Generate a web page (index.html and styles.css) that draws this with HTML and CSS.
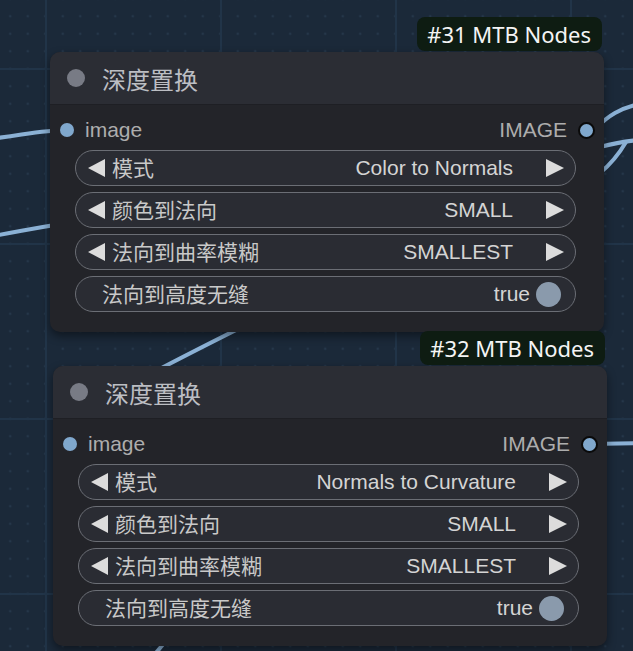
FILE: index.html
```html
<!DOCTYPE html>
<html lang="zh">
<head>
    <meta charset="UTF-8">
    <meta name="viewport" content="width=device-width, initial-scale=1.0">
    <title>深度置换</title>
    <link rel="stylesheet" href="styles.css">
</head>
<body>
    <div class="canvas">
        <svg class="links" width="633" height="651" viewBox="0 0 633 651">
            <path d="M -20 140 C 20 136, 40 130, 67 130" />
            <path d="M -20 238 C 20 232, 40 226, 90 220" />
            <path d="M 590 130 C 700 130, -60 444, 70 444" />
            <path d="M 596 128 C 608 116, 620 108, 640 104" />
            <path d="M 600 147 C 615 143, 625 141, 640 140" />
            <path d="M 626 142 C 619 154, 612 163, 600 173" />
            <path d="M 590 444 L 640 443" />
            <path d="M 150 660 L 170 636" />
        </svg>

        <div class="node node-31">
            <div class="badge">#31 MTB Nodes</div>
            <div class="node-title">
                <span class="title-dot"></span>
                <span>深度置换</span>
            </div>
            <div class="node-body">
                <div class="slots">
                    <div class="slot-in"><span class="dot"></span>image</div>
                    <div class="slot-out">IMAGE<span class="dot dot-out"></span></div>
                </div>
                <div class="widgets">
                    <div class="widget combo">
                        <span class="arrow left"></span>
                        <span class="label">模式</span>
                        <span class="value">Color to Normals</span>
                        <span class="arrow right"></span>
                    </div>
                    <div class="widget combo">
                        <span class="arrow left"></span>
                        <span class="label">颜色到法向</span>
                        <span class="value">SMALL</span>
                        <span class="arrow right"></span>
                    </div>
                    <div class="widget combo">
                        <span class="arrow left"></span>
                        <span class="label">法向到曲率模糊</span>
                        <span class="value">SMALLEST</span>
                        <span class="arrow right"></span>
                    </div>
                    <div class="widget toggle">
                        <span class="label">法向到高度无缝</span>
                        <span class="value">true</span>
                        <span class="knob"></span>
                    </div>
                </div>
            </div>
        </div>

        <div class="node node-32">
            <div class="badge">#32 MTB Nodes</div>
            <div class="node-title">
                <span class="title-dot"></span>
                <span>深度置换</span>
            </div>
            <div class="node-body">
                <div class="slots">
                    <div class="slot-in"><span class="dot"></span>image</div>
                    <div class="slot-out">IMAGE<span class="dot dot-out"></span></div>
                </div>
                <div class="widgets">
                    <div class="widget combo">
                        <span class="arrow left"></span>
                        <span class="label">模式</span>
                        <span class="value">Normals to Curvature</span>
                        <span class="arrow right"></span>
                    </div>
                    <div class="widget combo">
                        <span class="arrow left"></span>
                        <span class="label">颜色到法向</span>
                        <span class="value">SMALL</span>
                        <span class="arrow right"></span>
                    </div>
                    <div class="widget combo">
                        <span class="arrow left"></span>
                        <span class="label">法向到曲率模糊</span>
                        <span class="value">SMALLEST</span>
                        <span class="arrow right"></span>
                    </div>
                    <div class="widget toggle">
                        <span class="label">法向到高度无缝</span>
                        <span class="value">true</span>
                        <span class="knob"></span>
                    </div>
                </div>
            </div>
        </div>
    </div>
</body>
</html>
```

FILE: styles.css
```css
body {
    margin: 0;
    font-family: "Liberation Sans", "Noto Sans CJK SC", sans-serif;
    overflow: hidden;
}
.canvas {
    position: relative;
    width: 633px;
    height: 651px;
    background-color: #1b2939;
    background-image:
        linear-gradient(to right, #213448 0, #213448 2px, transparent 2px),
        linear-gradient(to bottom, #213448 0, #213448 2px, transparent 2px),
        radial-gradient(circle, #25374a 0, #25374a 1.2px, transparent 1.6px);
    background-size: 175px 175px, 175px 175px, 17.5px 17.5px;
    background-position: 45px 0, 0 68px, 1.5px 25px;
}
.links {
    position: absolute;
    left: 0;
    top: 0;
}
.links path {
    fill: none;
    stroke: #8bb1d5;
    stroke-width: 4;
}
.node {
    position: absolute;
    width: 554px;
    background: #232429;
    border-radius: 10px;
    box-shadow: 0 4px 10px rgba(0, 0, 0, 0.45);
}
.node-31 {
    left: 50px;
    top: 52px;
}
.node-32 {
    left: 53px;
    top: 366px;
}
.badge {
    position: absolute;
    right: 2px;
    bottom: calc(100% + 1px);
    height: 34px;
    padding: 0 11px 0 10px;
    display: flex;
    align-items: center;
    background: #0e1c12;
    color: #f4f4f4;
    font-family: "Noto Sans", sans-serif;
    font-size: 22px;
    border-radius: 8px;
}
.node-title {
    height: 52px;
    display: flex;
    align-items: center;
    gap: 17px;
    padding-left: 17px;
    background: #2b2d34;
    border-bottom: 1px solid #1e1f24;
    border-radius: 10px 10px 0 0;
    color: #bcbec3;
    font-size: 24px;
}
.title-dot {
    width: 18px;
    height: 18px;
    border-radius: 50%;
    background: #787b85;
}
.node-body {
    padding: 7px 0 20px;
}
.slots {
    height: 36px;
    margin-bottom: 2px;
    display: flex;
    align-items: center;
    justify-content: space-between;
    padding: 0 9px 0 10px;
    color: #adadad;
    font-size: 21px;
}
.slot-in, .slot-out {
    display: flex;
    align-items: center;
    gap: 11px;
}
.dot {
    width: 14px;
    height: 14px;
    border-radius: 50%;
    background: #80a8cd;
}
.dot-out {
    width: 13px;
    height: 13px;
    border: 2px solid #0a0a0a;
}
.widgets {
    display: flex;
    flex-direction: column;
    gap: 6px;
    margin: 0 28px 0 25px;
}
.widget {
    height: 36px;
    box-sizing: border-box;
    display: flex;
    align-items: center;
    background: #2a2c33;
    border: 1.5px solid #6b6e75;
    border-radius: 18px;
    font-size: 21px;
    color: #d4d4d4;
}
.widget .label {
    position: relative;
    top: -1px;
}
.combo {
    padding: 0 11px 0 12px;
}
.combo .label {
    flex: 1;
    margin-left: 7px;
    color: #c9c9c9;
}
.combo .value {
    margin-right: 33px;
}
.arrow {
    width: 0;
    height: 0;
    border-top: 9px solid transparent;
    border-bottom: 9px solid transparent;
}
.arrow.left {
    border-right: 17px solid #dcdcdc;
}
.arrow.right {
    border-left: 18px solid #dcdcdc;
}
.toggle {
    padding: 0 14px 0 26px;
}
.toggle .label {
    flex: 1;
    color: #c9c9c9;
}
.knob {
    width: 25px;
    height: 25px;
    margin-left: 6px;
    border-radius: 50%;
    background: #8a9aac;
}
```
